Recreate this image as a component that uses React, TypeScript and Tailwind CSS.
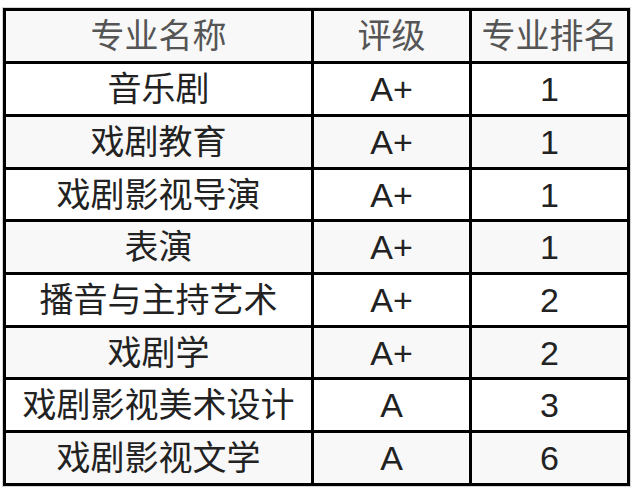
const rows = [
  { name: "音乐剧", grade: "A+", rank: "1" },
  { name: "戏剧教育", grade: "A+", rank: "1" },
  { name: "戏剧影视导演", grade: "A+", rank: "1" },
  { name: "表演", grade: "A+", rank: "1" },
  { name: "播音与主持艺术", grade: "A+", rank: "2" },
  { name: "戏剧学", grade: "A+", rank: "2" },
  { name: "戏剧影视美术设计", grade: "A", rank: "3" },
  { name: "戏剧影视文学", grade: "A", rank: "6" },
];

// row heights sum to 448 so the lines land on the reference pixels
const heights = ["h-[50px]", "h-[50px]", "h-[50px]", "h-[49px]", "h-[50px]", "h-[50px]", "h-[49px]", "h-[50px]", "h-[50px]"];

export default function App() {
  return (
    <div
      className="w-[634px] h-[491px] bg-white pt-[8px] pl-[3px]"
      style={{ fontFamily: '"Liberation Sans", "Noto Sans CJK SC", sans-serif' }}
    >
      <div className="w-[627px] bg-black p-[3px] grid grid-cols-[305px_155px_155px] gap-[3px] shadow-[0_0_0_1px_#d4d4d4] text-[34px] leading-none">
        {/* Header */}
        <div className={`${heights[0]} bg-[#f8f8f8] text-[#555] flex items-center justify-center`}>专业名称</div>
        <div className={`${heights[0]} bg-[#f8f8f8] text-[#555] flex items-center justify-center`}>评级</div>
        <div className={`${heights[0]} bg-[#f8f8f8] text-[#555] flex items-center justify-center`}>专业排名</div>

        {rows.map((r, i) => {
          const bg = i % 2 === 0 ? "bg-white" : "bg-[#f8f8f8]";
          const h = heights[i + 1];
          return [
            <div key={i + "n"} className={`${h} ${bg} text-[#222] flex items-center justify-center`}>
              {r.name}
            </div>,
            <div key={i + "g"} className={`${h} ${bg} text-[#222] flex items-center justify-center`}>
              {r.grade}
            </div>,
            <div key={i + "r"} className={`${h} ${bg} text-[#222] flex items-center justify-center`}>
              {r.rank}
            </div>,
          ];
        })}
      </div>
    </div>
  );
}
